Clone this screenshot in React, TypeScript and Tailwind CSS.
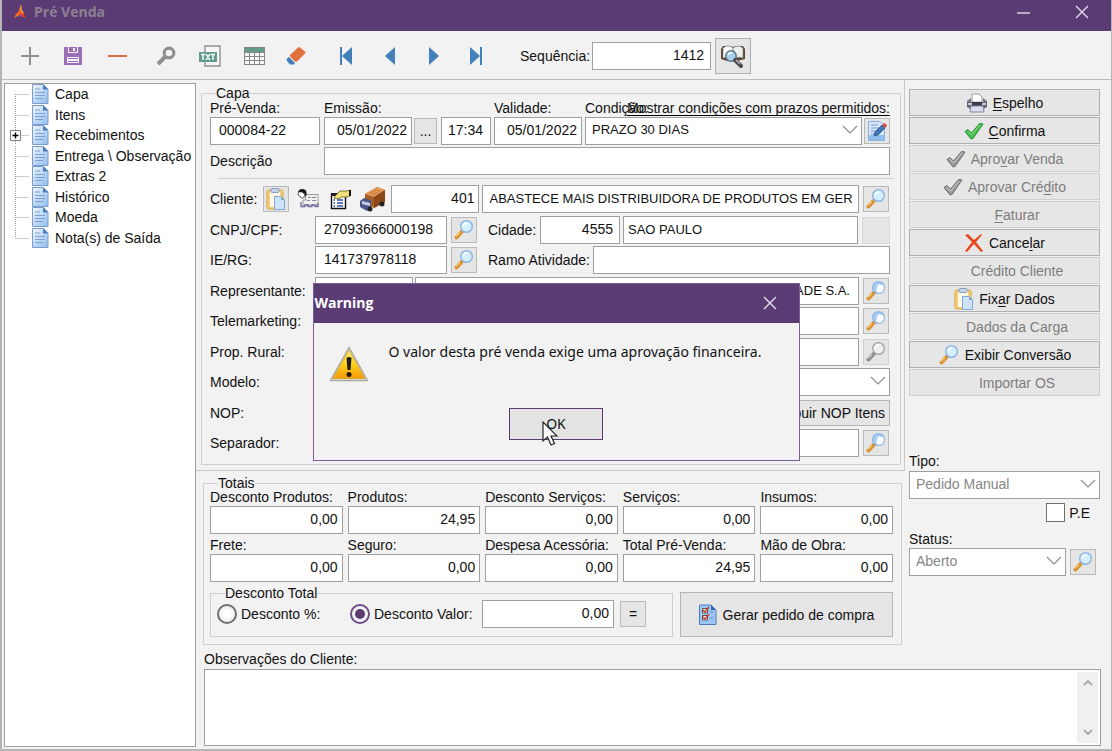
import { useId } from "react";
import type { ReactNode } from "react";

/* ---------- icons ---------- */

const IconBrand = () => (
  <svg width="16" height="16" viewBox="0 0 16 16">
    <path d="M8 0 6 7 9 13 11 9 9 6Z" fill="#f7a13c" />
    <path d="M6 7 3 10 1 14 7 11Z" fill="#f36b21" />
    <path d="M7 8 9 13 13 13 10 9Z" fill="#e23a2b" />
    <path d="M7 4 5 9 9 11Z" fill="#f05a28" />
  </svg>
);

const IconPlus = () => (
  <svg width="18" height="18" viewBox="0 0 18 18">
    <path d="M9 0V18M0 9H18" stroke="#8f9191" strokeWidth="2" />
  </svg>
);

const IconSave = () => (
  <svg width="18" height="18" viewBox="0 0 18 18">
    <path fill="#9a6fb5" fillRule="evenodd" d="M0 0H4V6H14V0H18V18H0ZM3 10V16H15V10Z" />
    <path fill="#9a6fb5" d="M5 0H13V5H5Z" />
    <path fill="#f2f2f2" d="M9 1H11V4H9Z" />
    <path fill="#9a6fb5" d="M4 11H14V12H4ZM4 14H14V15H4Z" />
  </svg>
);

const IconMinus = () => (
  <svg width="19" height="18" viewBox="0 0 19 18">
    <path d="M0 9H19" stroke="#df6d47" strokeWidth="2" />
  </svg>
);

const IconSearch = () => (
  <svg width="20" height="20" viewBox="0 0 20 20" fill="none" stroke="#8f9191">
    <circle cx="13" cy="7" r="4.800" strokeWidth="3.200" />
    <path d="M9 11 2 18" strokeWidth="4" />
  </svg>
);

const IconTxt = () => (
  <svg width="22" height="22" viewBox="0 0 22 22">
    <path d="M6 8V1H21V21H6V17" fill="#f7f7f7" stroke="#8f9191" strokeWidth="1.400" />
    <path d="M0 7H18V17H0Z" fill="#5f9c8c" />
    <path
      d="M2 9.500H6M4 9V15M7 9 11 15M11 9 7 15M12 9.500H16M14 9V15"
      stroke="#fff"
      strokeWidth="1.400"
      fill="none"
    />
  </svg>
);

const IconGrid = () => (
  <svg width="21" height="18" viewBox="0 0 21 18">
    <path d="M0 0H21V18H0Z" fill="#848787" />
    <path d="M1 1H20V5H1Z" fill="#659b8a" />
    <path
      fill="#f7f7f7"
      d="M1 6H5V9H1ZM6 6H10V9H6ZM11 6H15V9H11ZM16 6H20V9H16ZM1 10H5V13H1ZM6 10H10V13H6ZM11 10H15V13H11ZM16 10H20V13H16ZM1 14H5V17H1ZM6 14H10V17H6ZM11 14H15V17H11ZM16 14H20V17H16Z"
    />
  </svg>
);

const IconEraser = () => (
  <svg width="20" height="20" viewBox="0 0 20 20">
    <path d="M12 1.500Q13 .5 14 1.500L19 5.500Q20 6.500 19 7.500L11 15.500Q10 16 9 15.500L4 10.500Q3.500 9.500 4 9Z" fill="#e0703f" />
    <path d="M3 11 9 17 8 18.500H4L1 15Q0 13.500 1 12.500Z" fill="#477fbd" />
  </svg>
);

const IconNav = ({ d, w }: { d: string; w: number }) => (
  <svg width={w} height="18" viewBox={`0 0 ${w} 18`}>
    <path d={d} fill="#437fb9" />
  </svg>
);

const IconBook = () => (
  <svg width="26" height="26" viewBox="0 0 26 26">
    <path d="M1 6 3 3H10L13 4 16 3H23L25 6V16L17 18H7L1 16Z" fill="#5a4634" />
    <path d="M3 5Q8 1 13 5V16Q8 13 3 15Z" fill="#fdfdfb" stroke="#777" strokeWidth=".6" />
    <path d="M13 5Q18 1 23 5V15Q18 13 13 16Z" fill="#eeeeea" stroke="#777" strokeWidth=".6" />
    <circle cx="11" cy="13" r="5.200" fill="#a8d3ee" stroke="#5f7384" strokeWidth="1.500" />
    <path d="M8 12Q9 9 12 10" stroke="#fff" strokeWidth="1.500" fill="none" />
    <path d="M15 17 21 23" stroke="#4b4b4b" strokeWidth="4" strokeLinecap="round" />
    <path d="M16 17 20 21" stroke="#b9b9b9" strokeWidth="1.200" />
  </svg>
);

const IconPage = () => (
  <svg width="17" height="20" viewBox="0 0 17 20">
    <defs>
      <linearGradient id="pageFill" x1="0" y1="0" x2="1" y2="1">
        <stop offset="0" stopColor="#f1f7ff" />
        <stop offset="1" stopColor="#8fbdec" />
      </linearGradient>
    </defs>
    <path d="M.5 .5H11.500L16 5V19.500H.5Z" fill="url(#pageFill)" stroke="#7a9ccc" />
    <path d="M11 .5V5.500H16Z" fill="#4a7ac0" />
    <path d="M3 5H8M3 8.500H13M3 11.500H13M3 14.500H11" stroke="#7f9fd0" />
  </svg>
);

const IconMagnifier = ({ gray, target }: { gray?: boolean; target?: boolean }) => (
  <svg width="22" height="22" viewBox="0 0 22 22">
    <path d="M3.500 18.500 9 12.500" stroke={gray ? "#8d8d8d" : "#d8912e"} strokeWidth="4" strokeLinecap="round" />
    <path d="M3 17.500 7 13.500" stroke={gray ? "#c9c9c9" : "#f6c877"} strokeWidth="1.200" />
    <circle
      cx="13.500"
      cy="7.500"
      r="5.800"
      fill={gray ? "#efefef" : target ? "#a9cdf5" : "#d5effc"}
      stroke={gray ? "#aaaaaa" : "#8fb8e4"}
      strokeWidth="1.500"
    />
    {target ? (
      <path d="M13 4.500 18 5 19 8 17 12 14 13 11 11 12 8Z" fill="#fff" />
    ) : (
      <path d="M10 7Q11 4 14 4" stroke="#fff" strokeWidth="1.600" fill="none" />
    )}
  </svg>
);

const IconClipboard = () => (
  <svg width="20" height="22" viewBox="0 0 20 22">
    <rect x="1" y="2" width="16" height="19" rx="2" fill="#f3cd7a" stroke="#d9a440" />
    <path d="M4 4H14V19H4Z" fill="#fff8e6" />
    <rect x="5" y=".5" width="8" height="4" rx="1" fill="#c4d3ea" stroke="#8aa0c8" />
    <path d="M8.500 8.500H15L18.500 12V21.500H8.500Z" fill="#cfe3fb" stroke="#7ea8dc" />
    <path d="M15 8.500V12H18.500Z" fill="#7ea8dc" />
  </svg>
);

const IconContact = () => (
  <svg width="22" height="22" viewBox="0 0 22 22">
    <path d="M7.500 6.500H21V17H6V12H9Z" fill="#f0f0f0" stroke="#999" />
    <path d="M11 9.500H14M15 9.500H19M10 12.500H13M15 12.500H19" stroke="#8686a4" />
    <path d="M4 14V18.500H8V17H11V18.500H15V17H18V18.500H21V15" stroke="#6b68a0" strokeWidth="1.300" fill="none" />
    <path d="M1 4Q2 1 5 1Q9 1 9.500 4V7L8 9V6L5 4Z" fill="#161616" />
    <path d="M1.500 4 5 4 8 7 6.500 10H4L3 8 1 7Z" fill="#fff" stroke="#333" strokeWidth=".7" />
  </svg>
);

const IconForm = () => (
  <svg width="22" height="22" viewBox="0 0 22 22">
    <path d="M2.500 6.500H16.500V20.500H2.500Z" fill="#fff" stroke="#111" strokeWidth="1.400" />
    <path d="M2 5H16V8H2Z" fill="#222" />
    <path d="M4.500 12H6M4.500 15H6M4.500 18H6M8 12H14M8 15H14M8 18H14" stroke="#2c4ca8" strokeWidth="1.400" />
    <path d="M6 8 11 3H18L21 2V8L17 9H13L9 11 5 10Z" fill="#f1e07a" stroke="#5f5515" strokeWidth=".8" />
    <path d="M20 2H22V8H20Z" fill="#111" />
  </svg>
);

const IconTruck = () => (
  <svg width="28" height="26" viewBox="0 0 28 26">
    <path d="M6 8 18 1 26 4V16L15 22 6 17Z" fill="#a85d22" />
    <path d="M6 8 18 1 26 4 15 11Z" fill="#e59a58" />
    <path d="M15 11 26 4V16L15 22Z" fill="#8c4719" />
    <path d="M1 15 5 12 12 14V23L8 25 1 21Z" fill="#4d5787" />
    <path d="M3 15 11 17V20L3 18Z" fill="#c3cde8" />
    <circle cx="11" cy="23" r="2.500" fill="#222" />
    <circle cx="23" cy="18" r="2.500" fill="#222" />
    <path d="M10 8 18 4M13 9 21 5" stroke="#c37a3a" />
  </svg>
);

const IconEdit = () => (
  <svg width="20" height="22" viewBox="0 0 20 22">
    <path d="M1.500 1.500H13L17.500 6V20.500H1.500Z" fill="#d4e7fb" stroke="#8daede" />
    <path d="M2 15H17V20H2Z" fill="#8fc1ef" />
    <path d="M4 5H11M4 8H12M4 11H10M4 14H8" stroke="#7f9fc8" />
    <path d="M7 16 8 12 15 5 18 8 11 15Z" fill="#3b78b8" stroke="#2a4e7e" strokeWidth=".8" />
    <path d="M15 5 17 3Q19.500 3.500 20 6L18 8Z" fill="#dd5040" />
  </svg>
);

const IconPrinter = () => (
  <svg width="22" height="20" viewBox="0 0 22 20">
    <path d="M6 1H13L16 4V9H6Z" fill="#fff" stroke="#9a9a9a" />
    <path d="M1 8 5 5V9H17V5L21 8V14L18 16H4L1 14Z" fill="#77778a" />
    <path d="M1 9H21V14H1Z" fill="#66667a" />
    <path d="M2 10H6V12H2ZM16 10H20V12H16Z" fill="#c9c9d6" />
    <path d="M6 9H16V13H6Z" fill="#3c3c4c" />
    <path d="M5 13H17L18 19H4Z" fill="#dcdcf0" stroke="#84849a" />
  </svg>
);

const IconCheck = ({ gray }: { gray?: boolean }) => (
  <svg width="20" height="18" viewBox="0 0 20 18">
    <path
      d="M1 9.500 4 7.500 7.500 11 15.500 1.500 19 2 9 16.500 7 17Z"
      fill={gray ? "#9b9b9b" : "#45bd50"}
      stroke={gray ? "#6e6e6e" : "#279435"}
    />
    <path d="M3.500 9 7.500 13 16 3" stroke={gray ? "#cfcfcf" : "#8de08b"} fill="none" />
  </svg>
);

const IconCancel = () => (
  <svg width="20" height="20" viewBox="0 0 20 20">
    <path d="M1 2 4 1 10 7 17 1 18 2 12 9 19 18 17 19 10 11 3 19 1 18 8 9Z" fill="#e4481c" />
  </svg>
);

const IconChecklist = () => (
  <svg width="18" height="22" viewBox="0 0 18 22">
    <path d="M.5 1H12L17 6V20.500H.5Z" fill="#9cc7f5" stroke="#4f79bd" />
    <path d="M12 1V6H17Z" fill="#3568ae" />
    <path d="M3.500 4.500H8.500V9H3.500ZM3.500 11.500H8.500V16H3.500Z" fill="#eef5ff" stroke="#704747" />
    <path d="M4 6 6 8 10 3M4 13 6 15 10 10" stroke="#c5422c" strokeWidth="1.500" fill="none" />
    <path d="M11 8H14M11 14H14" stroke="#5f86c0" />
  </svg>
);

const IconWarning = () => (
  <svg width="40" height="36" viewBox="0 0 40 36">
    <defs>
      <linearGradient id="warnFill" x1="0" y1="0" x2="0" y2="1">
        <stop offset="0" stopColor="#fff27a" />
        <stop offset=".5" stopColor="#fcd116" />
        <stop offset="1" stopColor="#f29a0c" />
      </linearGradient>
    </defs>
    <path d="M20 1.500 38.500 34.500H1.500Z" fill="#e6e6e0" stroke="#a9a9a3" strokeWidth="1.500" strokeLinejoin="round" />
    <path d="M20 4.500 36 32.500H4Z" fill="url(#warnFill)" stroke="#e0a010" strokeWidth=".8" />
    <path d="M17.500 12Q20 10 22.500 12L21.500 24H18.500Z" fill="#1d1a10" />
    <circle cx="20" cy="28.500" r="2.500" fill="#1d1a10" />
  </svg>
);

const IconChevron = ({ className = "" }: { className?: string }) => (
  <svg width="16" height="9" viewBox="0 0 16 9" className={className}>
    <path d="M1 1 8 8 15 1" fill="none" stroke="#8d8d8d" strokeWidth="1.200" />
  </svg>
);

const IconScroll = ({ d }: { d: string }) => (
  <svg width="10" height="6" viewBox="0 0 10 6">
    <path d={d} fill="none" stroke="#acacac" strokeWidth="2" />
  </svg>
);

const IconClose = () => (
  <svg width="14" height="14" viewBox="0 0 14 14">
    <path d="M1 1 13 13M13 1 1 13" stroke="#e4dcec" strokeWidth="1.400" />
  </svg>
);

/* ---------- controls ---------- */

const box = "h-7 min-w-0 border border-[#9f9f9f] bg-white pb-0.5 outline-none";
const smallButton =
  "flex h-[26px] shrink-0 items-center justify-center border border-[#bababa] bg-[#e5e5e5]";

type FieldProps = {
  label: string;
  value?: string;
  right?: boolean;
  className?: string;
};

// label stacked over a text box
const Field = ({ label, value, right, className = "" }: FieldProps) => {
  const id = useId();
  return (
    <div className={`flex flex-col ${className}`}>
      <label htmlFor={id} className="whitespace-nowrap">
        {label}
      </label>
      <input
        id={id}
        defaultValue={value}
        className={`${box} mt-0.5 w-full ${right ? "pr-1 text-right" : "px-2"}`}
      />
    </div>
  );
};

type SelectProps = {
  id: string;
  value?: string;
  disabled?: boolean;
  className?: string;
};
const Select = ({ id, value = "", disabled, className = "" }: SelectProps) => (
  <div className={`relative flex min-w-0 ${className}`}>
    <select
      id={id}
      disabled={disabled}
      className="h-7 w-full appearance-none border border-[#9f9f9f] bg-white px-1.5 pb-0.5 outline-none disabled:text-[#868686] disabled:opacity-100"
    >
      <option>{value}</option>
    </select>
    <IconChevron className="pointer-events-none absolute top-2 right-1" />
  </div>
);

const SearchButton = ({ gray, target }: { gray?: boolean; target?: boolean }) => (
  <button aria-label="Pesquisar" disabled={gray} className={`${smallButton} mr-px ml-1 w-[26px] disabled:border-[#d0d0d0]`}>
    <IconMagnifier gray={gray} target={target} />
  </button>
);

const RowLabel = ({ id, children }: { id: string; children: ReactNode }) => (
  <label htmlFor={id} className="w-[105px] shrink-0 whitespace-nowrap">
    {children}
  </label>
);

/* ---------- toolbar ---------- */

const tools = [
  { name: "Novo", icon: <IconPlus />, width: "w-[43px]" },
  { name: "Salvar", icon: <IconSave />, width: "w-[43px]" },
  { name: "Excluir", icon: <IconMinus />, width: "w-[46px]" },
  { name: "Pesquisar", icon: <IconSearch />, width: "w-[52px]" },
  { name: "Exportar", icon: <IconTxt />, width: "w-9" },
  { name: "Grade", icon: <IconGrid />, width: "w-[52px]" },
  { name: "Limpar", icon: <IconEraser />, width: "w-8" },
  { name: "Primeiro", icon: <IconNav w={12} d="M0 0H2V18H0ZM12 0V18L2 9Z" />, width: "w-[68px]" },
  { name: "Anterior", icon: <IconNav w={10} d="M10 0V18L0 9Z" />, width: "w-5" },
  { name: "Próximo", icon: <IconNav w={10} d="M0 0V18L10 9Z" />, width: "w-[68px]" },
  { name: "Último", icon: <IconNav w={12} d="M0 0 10 9 0 18ZM10 0H12V18H10Z" />, width: "w-4" },
];

const Toolbar = () => (
  <div className="flex h-[49px] items-center border-b border-[#bdbdbd] pt-0.5 pl-1.5">
    {tools.map((t) => (
      <button key={t.name} aria-label={t.name} className={`flex shrink-0 justify-center ${t.width}`}>
        {t.icon}
      </button>
    ))}
    <label htmlFor="sequencia" className="ml-9 whitespace-nowrap">
      Sequência:
    </label>
    <input id="sequencia" defaultValue="1412" className={`${box} ml-0.5 w-[119px] pr-1.5 text-right`} />
    <button
      aria-label="Localizar"
      className="ml-1 flex h-9 w-9 items-center justify-center border border-[#b0b0b0] bg-[#e5e5e5]"
    >
      <IconBook />
    </button>
  </div>
);

/* ---------- tree ---------- */

const pages = [
  "Capa",
  "Itens",
  "Recebimentos",
  "Entrega \\ Observação",
  "Extras 2",
  "Histórico",
  "Moeda",
  "Nota(s) de Saída",
];

const Tree = () => (
  <nav className="mt-[3px] mb-0.5 ml-0.5 w-[192px] shrink-0 border border-[#9f9f9f] bg-white">
    <ul className="grid auto-rows-[20px_21px]">
      {pages.map((page, i) => (
        <li key={page} className="flex items-center pl-1">
          <svg width="22" height="20" viewBox="0 0 22 20" className="mr-px shrink-0">
            <path
              d={`M6.500 ${i === 0 ? 10 : 0}V${i === pages.length - 1 ? 10 : 20}M6.500 10.500H20`}
              stroke="#9a9a9a"
              strokeDasharray="1 1"
            />
            {page === "Recebimentos" && (
              <>
                <path d="M1.500 5.500H11.500V15.500H1.500Z" fill="#fff" stroke="#7d7d7d" />
                <path d="M3.500 10.500H9.500M6.500 7.500V13.500" stroke="#000" strokeWidth="1.400" />
              </>
            )}
          </svg>
          <a href="#" className="flex items-center gap-1.5 whitespace-nowrap">
            <IconPage />
            {page}
          </a>
        </li>
      ))}
    </ul>
  </nav>
);

/* ---------- capa ---------- */

const Capa = () => (
  <fieldset className="min-w-0 border border-[#cfcfcf] pt-px pr-2.5 pb-1 pl-2">
    <legend className="ml-1.5">Capa</legend>

    <div className="relative flex">
      <Field label="Pré-Venda:" value="000084-22" className="w-[110px] shrink-0" />
      <Field label="Emissão:" value="05/01/2022" right className="ml-1 w-[88px] shrink-0" />
      <button aria-label="Calendário" className={`${smallButton} mt-[17px] ml-0.5 w-[23px]`}>
        ...
      </button>
      <input aria-label="Hora" defaultValue="17:34" className={`${box} mt-4 ml-1 w-[50px] shrink-0 px-1.5`} />
      <Field label="Validade:" value="05/01/2022" right className="ml-[3px] w-[88px] shrink-0" />
      <div className="ml-[3px] flex min-w-0 flex-1 flex-col">
        <label htmlFor="condicao">Condição:</label>
        <Select id="condicao" value="PRAZO 30 DIAS" className="mt-0.5 text-[13px]" />
      </div>
      <button aria-label="Editar condição" className={`${smallButton} mt-[17px] ml-0.5 w-[26px]`}>
        <IconEdit />
      </button>
      <a href="#" className="absolute top-0 right-0 border-b border-black whitespace-nowrap">
        Mostrar condições com prazos permitidos:
      </a>
    </div>

    <div className="mt-0.5 flex items-center">
      <label htmlFor="descricao" className="w-[114px]">
        Descrição
      </label>
      <input id="descricao" className={`${box} flex-1`} />
    </div>

    <hr className="mt-[3px] -mr-1 mb-1.5 ml-2 border-[#cfcfcf]" />

    <div className="grid auto-rows-[31px_30px] items-start *:flex *:h-7 *:items-center">
      <div>
        <label htmlFor="cliente">Cliente:</label>
        <button aria-label="Colar" className={`${smallButton} ml-1.5 w-[26px]`}>
          <IconClipboard />
        </button>
        <button aria-label="Contato" className="ml-2">
          <IconContact />
        </button>
        <button aria-label="Ficha" className="ml-2.5">
          <IconForm />
        </button>
        <button aria-label="Entrega" className="mr-1 ml-2">
          <IconTruck />
        </button>
        <input id="cliente" defaultValue="401" className={`${box} w-[88px] shrink-0 pr-1 text-right`} />
        <input
          aria-label="Nome do cliente"
          defaultValue="ABASTECE MAIS DISTRIBUIDORA DE PRODUTOS EM GERAL"
          className={`${box} ml-[3px] flex-1 px-1.5 text-[13px]`}
        />
        <SearchButton />
      </div>
      <div>
        <RowLabel id="cnpj">CNPJ/CPF:</RowLabel>
        <input id="cnpj" defaultValue="27093666000198" className={`${box} w-[132px] px-2`} />
        <SearchButton />
        <label htmlFor="cidade" className="ml-2.5 w-[52px]">
          Cidade:
        </label>
        <input id="cidade" defaultValue="4555" className={`${box} w-20 pr-1.5 text-right`} />
        <input
          aria-label="Nome da cidade"
          defaultValue="SAO PAULO"
          className={`${box} ml-[3px] flex-1 px-1 text-[13px]`}
        />
        <button aria-label="Cidade" disabled className="ml-1 h-[27px] w-7 border border-[#d9d9d9] bg-[#e5e5e5]" />
      </div>
      <div>
        <RowLabel id="ie">IE/RG:</RowLabel>
        <input id="ie" defaultValue="141737978118" className={`${box} w-[132px] px-2`} />
        <SearchButton />
        <label htmlFor="ramo" className="ml-2.5 w-[105px] whitespace-nowrap">
          Ramo Atividade:
        </label>
        <input id="ramo" className={`${box} flex-1`} />
      </div>
      <div>
        <RowLabel id="representante">Representante:</RowLabel>
        <input id="representante" className={`${box} w-[98px]`} />
        <input
          aria-label="Nome do representante"
          defaultValue="ADE S.A."
          className={`${box} ml-0.5 flex-1 px-2 text-right text-[13px]`}
        />
        <SearchButton target />
      </div>
      <div>
        <RowLabel id="telemarketing">Telemarketing:</RowLabel>
        <input id="telemarketing" className={`${box} flex-1`} />
        <SearchButton target />
      </div>
      <div>
        <RowLabel id="rural">Prop. Rural:</RowLabel>
        <input id="rural" className={`${box} flex-1`} />
        <SearchButton gray />
      </div>
      <div>
        <RowLabel id="modelo">Modelo:</RowLabel>
        <Select id="modelo" className="flex-1" />
      </div>
      <div>
        <RowLabel id="nop">NOP:</RowLabel>
        <input id="nop" className={`${box} flex-1`} />
        <button className="ml-1 h-[26px] border border-[#b5b5b5] bg-[#e5e5e5] px-1 whitespace-nowrap">
          Atribuir NOP Itens
        </button>
      </div>
      <div>
        <RowLabel id="separador">Separador:</RowLabel>
        <input id="separador" className={`${box} flex-1`} />
        <SearchButton target />
      </div>
    </div>
  </fieldset>
);

/* ---------- totais ---------- */

const totals = [
  ["Desconto Produtos:", "0,00"],
  ["Produtos:", "24,95"],
  ["Desconto Serviços:", "0,00"],
  ["Serviços:", "0,00"],
  ["Insumos:", "0,00"],
  ["Frete:", "0,00"],
  ["Seguro:", "0,00"],
  ["Despesa Acessória:", "0,00"],
  ["Total Pré-Venda:", "24,95"],
  ["Mão de Obra:", "0,00"],
];

const radio =
  "h-5 w-5 shrink-0 appearance-none rounded-full border-2 border-[#6e6e6e] bg-white bg-clip-content p-[3px] checked:border-[#6b4d85] checked:bg-[#5b3b74]";

const Totais = () => (
  <fieldset className="mt-[5px] mr-[7px] ml-[7px] min-w-0 border border-[#cfcfcf] pr-2 pb-[7px] pl-1.5">
    <legend className="ml-2">Totais</legend>
    <div className="grid grid-cols-5 gap-x-[5px] gap-y-1">
      {totals.map(([label, value]) => (
        <Field key={label} label={label} value={value} right />
      ))}
    </div>
    <div className="mt-1 flex items-end">
      <fieldset className="flex-1 border border-[#cfcfcf] pb-2 pl-1.5">
        <legend className="ml-2">Desconto Total</legend>
        <div className="flex items-center">
          <label className="flex w-[133px] items-center gap-1 whitespace-nowrap">
            <input type="radio" name="desconto" className={radio} />
            Desconto %:
          </label>
          <label className="flex w-[132px] items-center gap-1 whitespace-nowrap">
            <input type="radio" name="desconto" defaultChecked className={radio} />
            Desconto Valor:
          </label>
          <input aria-label="Valor do desconto" defaultValue="0,00" className={`${box} w-[132px] pr-1 text-right`} />
          <button className={`${smallButton} ml-1.5 w-[26px]`}>=</button>
        </div>
      </fieldset>
      <button className="ml-[7px] flex h-[45px] w-[213px] items-center justify-center gap-1.5 border border-[#b5b5b5] bg-[#e5e5e5] whitespace-nowrap">
        <IconChecklist />
        Gerar pedido de compra
      </button>
    </div>
  </fieldset>
);

/* ---------- sidebar ---------- */

type Action = { text: [string, string, string]; icon?: ReactNode; disabled?: boolean };

// text is split around the underlined shortcut letter
const actions: Action[] = [
  { text: ["", "E", "spelho"], icon: <IconPrinter /> },
  { text: ["", "C", "onfirma"], icon: <IconCheck /> },
  { text: ["Apro", "v", "ar Venda"], icon: <IconCheck gray />, disabled: true },
  { text: ["Aprovar Cré", "d", "ito"], icon: <IconCheck gray />, disabled: true },
  { text: ["", "F", "aturar"], disabled: true },
  { text: ["Cance", "l", "ar"], icon: <IconCancel /> },
  { text: ["Crédito Cliente", "", ""], disabled: true },
  { text: ["Fix", "a", "r Dados"], icon: <IconClipboard /> },
  { text: ["Dados da Car", "g", "a"], disabled: true },
  { text: ["Exibir Conversão", "", ""], icon: <IconMagnifier /> },
  { text: ["Importar OS", "", ""], disabled: true },
];

const Sidebar = () => (
  <aside className="w-[202px] shrink-0 pt-[9px] pr-[11px]">
    <div className="flex flex-col gap-px">
      {actions.map(({ text, icon, disabled }) => (
        <button
          key={text.join("")}
          disabled={disabled}
          className="flex h-[27px] items-center justify-center gap-[5px] border border-[#b0b0b0] bg-[#e6e6e6] disabled:border-[#d0d0d0] disabled:text-[#7d7d7d]"
        >
          {icon ?? <span className="w-5" />}
          <span>
            {text[0]}
            <u className="underline-offset-2">{text[1]}</u>
            {text[2]}
          </span>
        </button>
      ))}
    </div>

    <label htmlFor="tipo" className="mt-[58px] block">
      Tipo:
    </label>
    <Select id="tipo" value="Pedido Manual" disabled className="mt-[3px]" />
    <label className="mt-1 mr-2.5 flex items-center justify-end gap-1">
      <input type="checkbox" className="h-[19px] w-[19px] appearance-none border border-[#6e6e6e] bg-white" />
      P.E
    </label>
    <label htmlFor="status" className="mt-2.5 block">
      Status:
    </label>
    <div className="mt-0.5 flex items-center pr-[3px]">
      <Select id="status" value="Aberto" disabled className="flex-1" />
      <SearchButton />
    </div>
  </aside>
);

/* ---------- dialog ---------- */

const Warning = () => (
  <div className="fixed inset-0 flex items-center justify-center pb-2">
    <div
      role="dialog"
      aria-labelledby="warning-title"
      className="w-[487px] border border-[#7d5c9b] bg-[#f2f2f2]"
    >
      <div className="flex h-[39px] items-center justify-between bg-[#5b3b74] pr-[22px] pl-px font-['Open_Sans',sans-serif] text-white">
        <h2 id="warning-title" className="text-sm font-bold">
          Warning
        </h2>
        <button aria-label="Fechar">
          <IconClose />
        </button>
      </div>
      <div className="flex gap-5 px-[15px] pt-[19px] font-['Noto_Sans',sans-serif]">
        <div className="pt-1">
          <IconWarning />
        </div>
        <p className="text-sm whitespace-nowrap">O valor desta pré venda exige uma aprovação financeira.</p>
      </div>
      <div className="flex justify-center pt-[26px] pb-5 font-['Noto_Sans',sans-serif]">
        <button className="relative h-8 w-[94px] border border-[#5b3b74] bg-[#e3e3e3] text-sm">
          OK
          <svg width="16" height="26" viewBox="0 0 16 26" className="absolute top-3 left-8">
            <path
              d="M1 1V20L5.500 16 9 24 12.500 22.500 9 15H15Z"
              fill="#fff"
              stroke="#222"
              strokeWidth="1.200"
            />
          </svg>
        </button>
      </div>
    </div>
  </div>
);

export default function App() {
  return (
    <div className="flex min-h-screen flex-col border-r border-b-2 border-l-2 border-[#b5b5b5] bg-[#f2f2f2] font-['Liberation_Sans',Arial,sans-serif] text-sm leading-[14px] text-[#111]">
      <header className="flex h-[31px] items-center bg-[#5b3b74] pr-[22px] pb-2 pl-[11px] font-['Open_Sans',sans-serif]">
        <IconBrand />
        <h1 className="ml-[5px] flex-1 font-bold text-[#8a8290]">Pré Venda</h1>
        <button aria-label="Minimizar" className="mr-[45px]">
          <svg width="13" height="14" viewBox="0 0 13 14">
            <path d="M0 8H13" stroke="#e4dcec" strokeWidth="1.400" />
          </svg>
        </button>
        <button aria-label="Fechar janela">
          <IconClose />
        </button>
      </header>
      <Toolbar />

      <div className="flex flex-1">
        <Tree />
        <main className="flex min-w-0 flex-1 flex-col">
          <div className="flex">
            <div className="min-w-0 flex-1">
              <div className="mr-1 border-r border-b border-[#c9c9c9] pt-1.5 pr-[3px] pb-[5px] pl-[5px]">
                <Capa />
              </div>
              <Totais />
            </div>
            <Sidebar />
          </div>
          <div className="mt-[7px] mr-2.5 mb-[3px] ml-2 flex flex-1 flex-col">
            <label htmlFor="obs">Observações do Cliente:</label>
            <div className="mt-[3px] flex flex-1 border border-[#9f9f9f] bg-white">
              <textarea id="obs" className="flex-1 resize-none p-1 outline-none" />
              <div className="my-0.5 mr-0.5 flex w-[21px] flex-col items-center justify-between bg-[#f0f0f0] py-2">
                <IconScroll d="M1 5 5 1 9 5" />
                <IconScroll d="M1 1 5 5 9 1" />
              </div>
            </div>
          </div>
        </main>
      </div>
      <Warning />
    </div>
  );
}
